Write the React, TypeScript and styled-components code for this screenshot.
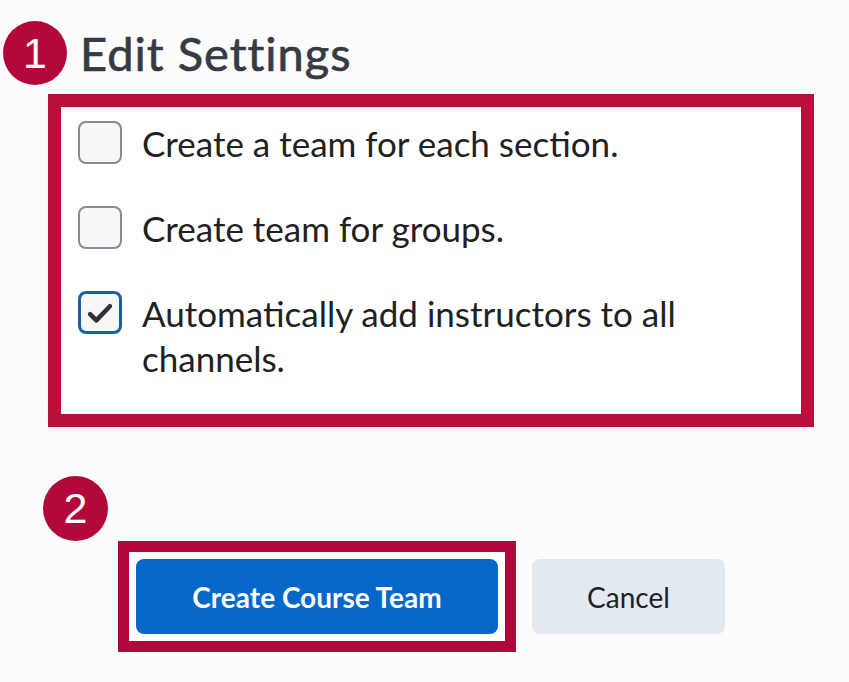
import React from 'react'
import styled, { createGlobalStyle, css } from 'styled-components'

const GlobalStyle = createGlobalStyle`
	html, body {
		margin: 0;
		padding: 0;
		background: #fcfcfd;
		font-family: Lato, "Open Sans", "Liberation Sans", sans-serif;
	}
	* {
		box-sizing: border-box;
	}
`

const Page = styled.main`
	width: 849px;
	height: 682px;
	overflow: hidden;
`

const Badge = styled.div<{ size: number }>`
	flex: 0 0 auto;
	display: flex;
	align-items: center;
	justify-content: center;
	width: ${({ size }) => size}px;
	height: ${({ size }) => size}px;
	border-radius: 50%;
	background: #b3093a;
	color: #ffffff;
	font-family: "Liberation Sans", Arial, sans-serif;
	font-size: 43px;
	line-height: 1;
`

const Header = styled.header`
	display: flex;
	align-items: center;
	gap: 13px;
	margin-top: 21px;
	padding-left: 3px;
`

const Title = styled.h1`
	margin: 0;
	font-size: 47px;
	line-height: 64px;
	font-weight: 400;
	color: #363b43;
	letter-spacing: 1px;
	-webkit-text-stroke: 0.7px #363b43;
`

const SettingsBox = styled.section`
	width: 766px;
	margin: 9px 0 0 48px;
	padding: 14px 0 33px 17px;
	border: 13px solid #b80f3b;
	background: #ffffff;
	display: flex;
	flex-direction: column;
	gap: 40px;
`

const Option = styled.label`
	display: flex;
	align-items: flex-start;
	gap: 20px;
	cursor: pointer;
`

const Box = styled.span<{ checked?: boolean }>`
	flex: 0 0 auto;
	display: flex;
	align-items: center;
	justify-content: center;
	width: 44px;
	height: 43px;
	border-radius: 8px;
	background: #f6f7f9;
	border: 2px solid #878b92;

	${({ checked }) =>
		checked &&
		css`
			border: 3px solid #1b5da6;
		`}
`

const OptionText = styled.span`
	font-size: 35px;
	line-height: 45px;
	color: #202122;
	max-width: 560px;
`

const Actions = styled.section`
	margin-top: 49px;
	padding-left: 43px;
`

const ButtonRow = styled.div`
	display: flex;
	align-items: center;
	gap: 16px;
	margin-left: 75px;
`

const Highlight = styled.div`
	border: 11px solid #b0083a;
	padding: 7px;
	background: #ffffff;
`

const Button = styled.button<{ primary?: boolean }>`
	height: 75px;
	border: none;
	border-radius: 8px;
	font-family: Lato, "Open Sans", sans-serif;
	font-size: 28px;
	cursor: pointer;

	${({ primary }) =>
		primary
			? css`
					width: 362px;
					background: #0568c9;
					color: #ffffff;
					font-weight: 700;
			  `
			: css`
					width: 193px;
					background: #e3e9f1;
					color: #202122;
					font-weight: 400;
			  `}
`

const CheckIcon = () => (
	<svg viewBox="0 0 24 24" width={34} height={34}>
		<path
			d="M5 12.8l4.4 4.4L19 7.2"
			fill="none"
			stroke="#303236"
			strokeWidth={3.2}
			strokeLinecap="round"
			strokeLinejoin="round"
		/>
	</svg>
)

const options = [
	{ label: 'Create a team for each section.', checked: false },
	{ label: 'Create team for groups.', checked: false },
	{ label: 'Automatically add instructors to all channels.', checked: true },
]

export default function App() {
	return (
		<>
			<GlobalStyle />
			<Page>
				<Header>
					<Badge size={64}>1</Badge>
					<Title>Edit Settings</Title>
				</Header>

				<SettingsBox>
					{options.map(({ label, checked }) => (
						<Option key={label}>
							<Box checked={checked}>{checked && <CheckIcon />}</Box>
							<OptionText>{label}</OptionText>
						</Option>
					))}
				</SettingsBox>

				<Actions>
					<Badge size={65}>2</Badge>
					<ButtonRow>
						<Highlight>
							<Button primary>Create Course Team</Button>
						</Highlight>
						<Button>Cancel</Button>
					</ButtonRow>
				</Actions>
			</Page>
		</>
	)
}
